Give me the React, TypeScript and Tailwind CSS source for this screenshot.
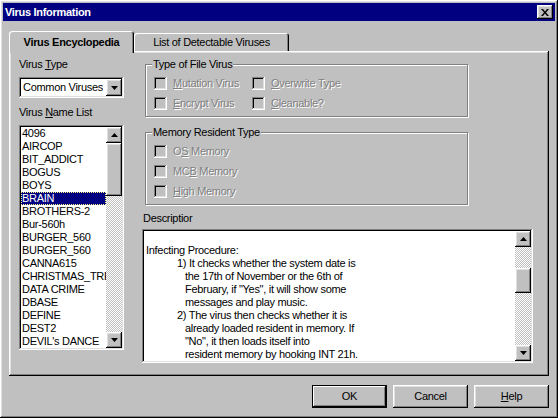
import React from 'react';

const RAISED =
  'shadow-[inset_-1px_-1px_#000,inset_1px_1px_#fff,inset_-2px_-2px_#808080,inset_2px_2px_#dfdfdf]';
const SUNKEN =
  'shadow-[inset_-1px_-1px_#fff,inset_1px_1px_#808080,inset_-2px_-2px_#dfdfdf,inset_2px_2px_#000]';
const DITHER = 'bg-[repeating-conic-gradient(#c0c0c0_0_25%,#fff_0_50%)] bg-[length:2px_2px]';

const VIRUSES = [
  '4096',
  'AIRCOP',
  'BIT_ADDICT',
  'BOGUS',
  'BOYS',
  'BRAIN',
  'BROTHERS-2',
  'Bur-560h',
  'BURGER_560',
  'BURGER_560',
  'CANNA615',
  'CHRISTMAS_TREE',
  'DATA CRIME',
  'DBASE',
  'DEFINE',
  'DEST2',
  "DEVIL's DANCE",
];

function Arrow({ down }: { down?: boolean }) {
  return (
    <svg width="7" height="4" viewBox="0 0 7 4">
      <path d={down ? 'M0 0h7L3.5 4z' : 'M0 4h7L3.5 0z'} fill="#000" />
    </svg>
  );
}

function ArrowButton({ down }: { down?: boolean }) {
  return (
    <div className={`h-4 w-4 shrink-0 bg-[#c0c0c0] flex items-center justify-center ${RAISED}`}>
      <Arrow down={down} />
    </div>
  );
}

// vertical scrollbar: gap above thumb + thumb height
function ScrollBar({ gap, thumb }: { gap: number; thumb: number }) {
  return (
    <div className="flex h-full w-4 shrink-0 flex-col">
      <ArrowButton />
      <div className={`shrink-0 ${DITHER}`} style={{ height: gap }} />
      <div className={`shrink-0 bg-[#c0c0c0] ${RAISED}`} style={{ height: thumb }} />
      <div className={`flex-1 ${DITHER}`} />
      <ArrowButton down />
    </div>
  );
}

function Acc({ children }: { children: React.ReactNode }) {
  return <span className="underline underline-offset-[1px]">{children}</span>;
}

function Check({ children }: { children: React.ReactNode }) {
  return (
    <div className="flex h-[13px] items-center gap-[6px]">
      <div className={`h-[13px] w-[13px] shrink-0 bg-[#c0c0c0] ${SUNKEN}`} />
      <span className="text-[#808080] [text-shadow:1px_1px_0_#fff] whitespace-nowrap">{children}</span>
    </div>
  );
}

function Group({ label, h, children }: { label: string; h: number; children: React.ReactNode }) {
  return (
    <div
      className="relative ml-[3px] w-[323px] border border-[#808080] shadow-[inset_1px_1px_#fff,1px_1px_#fff]"
      style={{ height: h }}
    >
      <span className="absolute -top-[7px] left-[6px] bg-[#c0c0c0] px-[1px] leading-[13px]">{label}</span>
      {children}
    </div>
  );
}

function Button({ children, def }: { children: React.ReactNode; def?: boolean }) {
  return (
    <div
      className={`flex h-[23px] w-[75px] items-center justify-center bg-[#c0c0c0] ${
        def ? 'outline outline-1 outline-black -outline-offset-1 shadow-[inset_-2px_-2px_#000,inset_2px_2px_#fff,inset_-3px_-3px_#808080]' : RAISED
      }`}
    >
      {children}
    </div>
  );
}

export default function App() {
  return (
    <div
      className={`flex h-[418px] w-[558px] flex-col bg-[#c0c0c0] p-[3px] text-[11px] leading-[13px] tracking-[-0.3px] text-black font-['Liberation_Sans',Arial,sans-serif] ${RAISED}`}
    >
      {/* title bar */}
      <div className="flex h-[18px] shrink-0 items-center justify-between bg-[#000080] pl-[2px] pr-[2px]">
        <span className="font-bold text-white">Virus Information</span>
        <div className={`flex h-[14px] w-[16px] items-center justify-center bg-[#c0c0c0] ${RAISED}`}>
          <svg width="8" height="7" viewBox="0 0 8 7">
            <path d="M0 0h2l2 2.5L6 0h2L5 3.5 8 7H6L4 4.5 2 7H0l3-3.5z" fill="#000" />
          </svg>
        </div>
      </div>

      <div className="flex flex-1 flex-col px-[6px] pt-[10px]">
        {/* tabs */}
        <div className="relative z-10 flex h-[22px] items-end">
          <div className="flex h-[22px] w-[125px] items-start justify-center rounded-t-[3px] bg-[#c0c0c0] pt-[5px] font-bold shadow-[inset_1px_1px_#fff,inset_-1px_0_#000,inset_-2px_0_#808080]">
            Virus Encyclopedia
          </div>
          <div className="mb-[2px] flex h-[18px] w-[155px] items-start justify-center rounded-t-[3px] bg-[#c0c0c0] pt-[3px] shadow-[inset_1px_1px_#fff,inset_-1px_0_#000,inset_-2px_0_#808080]">
            List of Detectable Viruses
          </div>
        </div>

        {/* tab page */}
        <div className={`relative -mt-[2px] flex h-[325px] w-[540px] gap-[18px] bg-[#c0c0c0] pl-[10px] ${RAISED}`}>
          {/* left column */}
          <div className="flex w-[105px] flex-col pt-[7px]">
            <div className="h-[13px]">
              Virus <Acc>T</Acc>ype
            </div>
            <div className={`mt-[6px] flex h-[21px] items-center justify-between bg-white pl-[4px] pr-[2px] ${SUNKEN}`}>
              <span className="overflow-hidden whitespace-nowrap">Common Viruses</span>
              <div className={`flex h-[17px] w-4 shrink-0 items-center justify-center bg-[#c0c0c0] ${RAISED}`}>
                <Arrow down />
              </div>
            </div>
            <div className="mt-[8px] h-[13px]">
              Virus <Acc>N</Acc>ame List
            </div>
            <div className={`mt-[6px] flex h-[225px] bg-white p-[2px] ${SUNKEN}`}>
              <div className="flex min-w-0 flex-1 flex-col overflow-hidden">
                {VIRUSES.map((v, i) => (
                  <div
                    key={i}
                    className={`h-[13px] shrink-0 whitespace-nowrap px-[1px] ${
                      v === 'BRAIN'
                        ? 'bg-[#000080] text-white outline outline-1 outline-dotted outline-[#ffff80] -outline-offset-1'
                        : ''
                    }`}
                  >
                    {v}
                  </div>
                ))}
              </div>
              <ScrollBar gap={0} thumb={53} />
            </div>
          </div>

          {/* right column */}
          <div className="flex w-[391px] flex-col pt-[13px]">
            <Group label="Type of File Virus" h={53}>
              <div className="grid grid-cols-[98px_1fr] gap-y-[7px] pl-[8px] pt-[12px]">
                <Check>
                  <Acc>M</Acc>utation Virus
                </Check>
                <Check>
                  <Acc>O</Acc>verwrite Type
                </Check>
                <Check>
                  <Acc>E</Acc>ncrypt Virus
                </Check>
                <Check>
                  <Acc>C</Acc>leanable?
                </Check>
              </div>
            </Group>
            <div className="mt-[15px]">
              <Group label="Memory Resident Type" h={73}>
                <div className="flex flex-col gap-[7px] pl-[8px] pt-[12px]">
                  <Check>
                    O<Acc>S</Acc> Memory
                  </Check>
                  <Check>
                    MC<Acc>B</Acc> Memory
                  </Check>
                  <Check>
                    <Acc>H</Acc>igh Memory
                  </Check>
                </div>
              </Group>
            </div>
            <div className="mt-[7px] h-[13px] pl-[1px]">Descriptior</div>
            <div className={`mt-[4px] flex h-[134px] bg-white p-[2px] ${SUNKEN}`}>
              <div className="flex-1 overflow-hidden pl-[2px]">
                <div className="h-[13px]" />
                <div>Infecting Procedure:</div>
                <div className="pl-[31px]">1) It checks whether the system date is</div>
                <div className="pl-[39px]">the 17th of November or the 6th of</div>
                <div className="pl-[39px]">February, if "Yes", it will show some</div>
                <div className="pl-[39px]">messages and play music.</div>
                <div className="pl-[31px]">2) The virus then checks whether it is</div>
                <div className="pl-[39px]">already loaded resident in memory. If</div>
                <div className="pl-[39px]">"No", it then loads itself into</div>
                <div className="pl-[39px]">resident memory by hooking INT 21h.</div>
              </div>
              <ScrollBar gap={21} thumb={25} />
            </div>
          </div>
        </div>

        {/* buttons */}
        <div className="mt-[9px] flex w-[540px] justify-end gap-[6px]">
          <Button def>OK</Button>
          <Button>Cancel</Button>
          <Button>
            <Acc>H</Acc>elp
          </Button>
        </div>
      </div>
    </div>
  );
}
